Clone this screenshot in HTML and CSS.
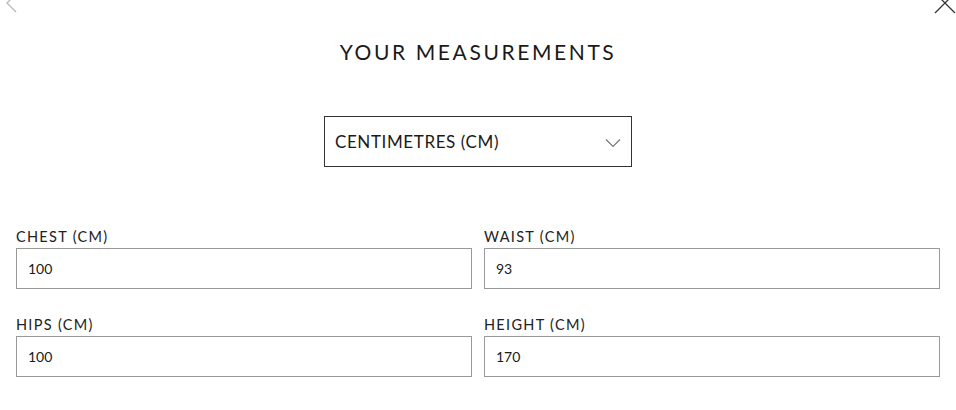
FILE: index.html
```html
<!DOCTYPE html>
<html>
<head>
<title>Your measurements</title>
<link rel="stylesheet" href="styles.css">
</head>
<body>
<div class="modal">
	<span class="back"><svg width="14" height="22" viewBox="0 0 14 22"><path d="M12 1 L3 10 L12 19" fill="none" stroke="#bbb" stroke-width="1.4"/></svg></span>
	<span class="close"><svg width="24" height="24" viewBox="0 0 24 24"><path d="M2 2 L22 22 M22 2 L2 22" fill="none" stroke="#333" stroke-width="1.3"/></svg></span>

	<h1 class="title">YOUR MEASUREMENTS</h1>

	<div class="unit_wrap">
		<div class="unit_select">
			<span>CENTIMETRES (CM)</span>
			<svg width="16" height="10" viewBox="0 0 16 10"><path d="M1 1.5 L8 8.5 L15 1.5" fill="none" stroke="#777" stroke-width="1.2"/></svg>
		</div>
	</div>

	<div class="fields">
		<div class="field">
			<label>CHEST (CM)</label>
			<div class="box">100</div>
		</div>
		<div class="field">
			<label>WAIST (CM)</label>
			<div class="box">93</div>
		</div>
		<div class="field">
			<label>HIPS (CM)</label>
			<div class="box">100</div>
		</div>
		<div class="field">
			<label>HEIGHT (CM)</label>
			<div class="box">170</div>
		</div>
	</div>
</div>
</body>
</html>
```
FILE: styles.css
```css
body{
	margin:0;
	background:#fff;
	font-family:"Lato","Liberation Sans",sans-serif;
	color:#1a1a1a;
}
.modal{
	position:relative;
	width:956px;
	height:410px;
	overflow:hidden;
}
.back{
	position:absolute;
	left:4px;
	top:-7px;
}
.close{
	position:absolute;
	left:933px;
	top:-9px;
}
.title{
	margin:0;
	padding-top:38px;
	text-align:center;
	font-size:21px;
	font-weight:400;
	letter-spacing:2.6px;
	line-height:28px;
}
.unit_wrap{
	display:flex;
	justify-content:center;
	margin-top:50px;
}
.unit_select{
	box-sizing:border-box;
	width:308px;
	height:51px;
	border:1.5px solid #333;
	display:flex;
	align-items:center;
	justify-content:space-between;
	padding:0 10px 0 10px;
	font-size:17px;
	letter-spacing:0.6px;
}
.unit_select svg{
	margin-top:2px;
}
.fields{
	display:grid;
	grid-template-columns:1fr 1fr;
	column-gap:12px;
	row-gap:27px;
	padding:0 16px;
	margin-top:61px;
}
.field label{
	display:block;
	font-size:14.5px;
	letter-spacing:1.3px;
	line-height:18px;
	margin-bottom:2px;
	color:#222;
}
.box{
	box-sizing:border-box;
	height:41px;
	border:1px solid #999;
	padding:0 11px;
	display:flex;
	align-items:center;
	font-size:14px;
}
```
